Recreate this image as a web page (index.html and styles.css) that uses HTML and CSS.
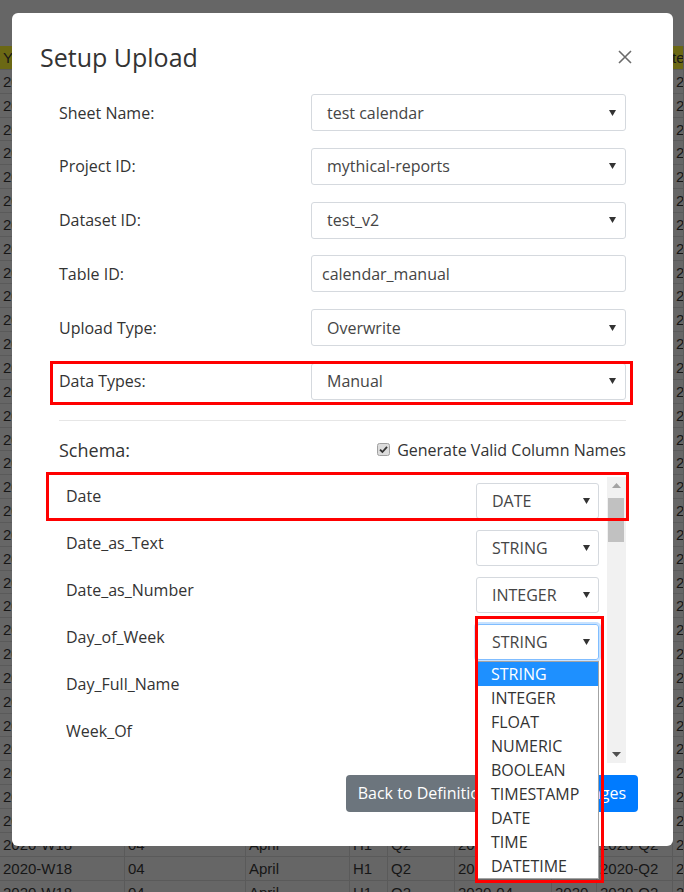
FILE: index.html
```html
<!DOCTYPE html>
<html>
<head>
<meta charset="utf-8">
<title>Setup Upload</title>
<link rel="stylesheet" href="styles.css">
</head>
<body>
<div class="sheet">
  <div class="toolbar"></div>
  <div class="r head"><span>Year_Week</span><span></span><span></span><span></span><span></span><span></span><span></span><span></span><span>Year_Quarter</span></div>
  <div class="r"><span>2020-W14</span><span></span><span></span><span></span><span></span><span></span><span></span><span></span><span>2020</span></div>
  <div class="r"><span>2020-W14</span><span></span><span></span><span></span><span></span><span></span><span></span><span></span><span>2020</span></div>
  <div class="r"><span>2020-W14</span><span></span><span></span><span></span><span></span><span></span><span></span><span></span><span>2020</span></div>
  <div class="r"><span>2020-W14</span><span></span><span></span><span></span><span></span><span></span><span></span><span></span><span>2020</span></div>
  <div class="r"><span>2020-W15</span><span></span><span></span><span></span><span></span><span></span><span></span><span></span><span>2020</span></div>
  <div class="r"><span>2020-W15</span><span></span><span></span><span></span><span></span><span></span><span></span><span></span><span>2020</span></div>
  <div class="r"><span>2020-W15</span><span></span><span></span><span></span><span></span><span></span><span></span><span></span><span>2020</span></div>
  <div class="r"><span>2020-W15</span><span></span><span></span><span></span><span></span><span></span><span></span><span></span><span>2020</span></div>
  <div class="r"><span>2020-W15</span><span></span><span></span><span></span><span></span><span></span><span></span><span></span><span>2020</span></div>
  <div class="r"><span>2020-W15</span><span></span><span></span><span></span><span></span><span></span><span></span><span></span><span>2020</span></div>
  <div class="r"><span>2020-W15</span><span></span><span></span><span></span><span></span><span></span><span></span><span></span><span>2020</span></div>
  <div class="r"><span>2020-W16</span><span></span><span></span><span></span><span></span><span></span><span></span><span></span><span>2020</span></div>
  <div class="r"><span>2020-W16</span><span></span><span></span><span></span><span></span><span></span><span></span><span></span><span>2020</span></div>
  <div class="r"><span>2020-W16</span><span></span><span></span><span></span><span></span><span></span><span></span><span></span><span>2020</span></div>
  <div class="r"><span>2020-W16</span><span></span><span></span><span></span><span></span><span></span><span></span><span></span><span>2020</span></div>
  <div class="r"><span>2020-W16</span><span></span><span></span><span></span><span></span><span></span><span></span><span></span><span>2020</span></div>
  <div class="r"><span>2020-W16</span><span></span><span></span><span></span><span></span><span></span><span></span><span></span><span>2020</span></div>
  <div class="r"><span>2020-W16</span><span></span><span></span><span></span><span></span><span></span><span></span><span></span><span>2020</span></div>
  <div class="r"><span>2020-W17</span><span></span><span></span><span></span><span></span><span></span><span></span><span></span><span>2020</span></div>
  <div class="r"><span>2020-W17</span><span></span><span></span><span></span><span></span><span></span><span></span><span></span><span>2020</span></div>
  <div class="r"><span>2020-W17</span><span></span><span></span><span></span><span></span><span></span><span></span><span></span><span>2020</span></div>
  <div class="r"><span>2020-W17</span><span></span><span></span><span></span><span></span><span></span><span></span><span></span><span>2020</span></div>
  <div class="r"><span>2020-W17</span><span></span><span></span><span></span><span></span><span></span><span></span><span></span><span>2020</span></div>
  <div class="r"><span>2020-W17</span><span></span><span></span><span></span><span></span><span></span><span></span><span></span><span>2020</span></div>
  <div class="r"><span>2020-W17</span><span></span><span></span><span></span><span></span><span></span><span></span><span></span><span>2020</span></div>
  <div class="r"><span>2020-W18</span><span></span><span></span><span></span><span></span><span></span><span></span><span></span><span>2020</span></div>
  <div class="r"><span>2020-W18</span><span></span><span></span><span></span><span></span><span></span><span></span><span></span><span>2020</span></div>
  <div class="r"><span>2020-W18</span><span></span><span></span><span></span><span></span><span></span><span></span><span></span><span>2020</span></div>
  <div class="r"><span>2020-W18</span><span></span><span></span><span></span><span></span><span></span><span></span><span></span><span>2020</span></div>
  <div class="r"><span>2020-W18</span><span></span><span></span><span></span><span></span><span></span><span></span><span></span><span>2020</span></div>
  <div class="r"><span>2020-W18</span><span>04</span><span>April</span><span>H1</span><span>Q2</span><span>2020-04</span><span>2020</span><span>2020-Q2</span><span>2020</span></div>
  <div class="r"><span>2020-W18</span><span>04</span><span>April</span><span>H1</span><span>Q2</span><span>2020-04</span><span>2020</span><span>2020-Q2</span><span>2020</span></div>
  <div class="r"><span>2020-W18</span><span>04</span><span>April</span><span>H1</span><span>Q2</span><span>2020-04</span><span>2020</span><span>2020-Q2</span><span>2020</span></div>
  <div class="r"><span>2020-W18</span><span>04</span><span>April</span><span>H1</span><span>Q2</span><span>2020-04</span><span>2020</span><span>2020-Q2</span><span>2020</span></div>
  <div class="r"><span>2020-W18</span><span>04</span><span>April</span><span>H1</span><span>Q2</span><span>2020-04</span><span>2020</span><span>2020-Q2</span><span>2020</span></div>
</div>

<div class="modal">
  <div class="modal-header">
    <h1 class="title">Setup Upload</h1>
    <span class="close"><svg width="14" height="14" viewBox="0 0 14 14"><path d="M1 1L13 13M13 1L1 13" stroke="#6b6b6b" stroke-width="1.6" fill="none"/></svg></span>
  </div>
  <div class="modal-body">
    <div class="field"><label>Sheet Name:</label><div class="select"><span>test calendar</span><svg class="caret" width="7" height="6" viewBox="0 0 7 6"><path d="M0 0H7L3.5 6Z" fill="#333"/></svg></div></div>
    <div class="field"><label>Project ID:</label><div class="select"><span>mythical-reports</span><svg class="caret" width="7" height="6" viewBox="0 0 7 6"><path d="M0 0H7L3.5 6Z" fill="#333"/></svg></div></div>
    <div class="field"><label>Dataset ID:</label><div class="select"><span>test_v2</span><svg class="caret" width="7" height="6" viewBox="0 0 7 6"><path d="M0 0H7L3.5 6Z" fill="#333"/></svg></div></div>
    <div class="field"><label>Table ID:</label><div class="select input"><span>calendar_manual</span></div></div>
    <div class="field"><label>Upload Type:</label><div class="select"><span>Overwrite</span><svg class="caret" width="7" height="6" viewBox="0 0 7 6"><path d="M0 0H7L3.5 6Z" fill="#333"/></svg></div></div>
    <div class="field last"><label>Data Types:</label><div class="select"><span>Manual</span><svg class="caret" width="7" height="6" viewBox="0 0 7 6"><path d="M0 0H7L3.5 6Z" fill="#333"/></svg></div></div>
    <div class="divider"></div>
    <div class="schema-head">
      <span class="schema-title">Schema:</span>
      <span class="chk"><svg class="box" width="13" height="13" viewBox="0 0 13 13"><rect x="0.5" y="0.5" width="12" height="12" rx="2" fill="#dcdcdc" stroke="#a0a0a0"/><path d="M3 6.6L5.4 9L10 3.8" stroke="#333" stroke-width="1.8" fill="none"/></svg>Generate Valid Column Names</span>
    </div>
    <div class="list">
      <div class="rows">
        <div class="srow"><span class="name">Date</span><div class="sel"><span>DATE</span><svg class="caret" width="7" height="6" viewBox="0 0 7 6"><path d="M0 0H7L3.5 6Z" fill="#333"/></svg></div></div>
        <div class="srow"><span class="name">Date_as_Text</span><div class="sel"><span>STRING</span><svg class="caret" width="7" height="6" viewBox="0 0 7 6"><path d="M0 0H7L3.5 6Z" fill="#333"/></svg></div></div>
        <div class="srow"><span class="name">Date_as_Number</span><div class="sel"><span>INTEGER</span><svg class="caret" width="7" height="6" viewBox="0 0 7 6"><path d="M0 0H7L3.5 6Z" fill="#333"/></svg></div></div>
        <div class="srow"><span class="name">Day_of_Week</span><div class="sel focus"><span>STRING</span><svg class="caret" width="7" height="6" viewBox="0 0 7 6"><path d="M0 0H7L3.5 6Z" fill="#333"/></svg></div></div>
        <div class="srow"><span class="name">Day_Full_Name</span><div class="sel hidden-sel"></div></div>
        <div class="srow"><span class="name">Week_Of</span><div class="sel hidden-sel"></div></div>
      </div>
      <div class="scrollbar">
        <div class="arrow up"><svg width="9" height="5" viewBox="0 0 9 5"><path d="M0 5H9L4.5 0Z" fill="#a3a3a3"/></svg></div>
        <div class="thumb"></div>
        <div class="arrow down"><svg width="9" height="5" viewBox="0 0 9 5"><path d="M0 0H9L4.5 5Z" fill="#505050"/></svg></div>
      </div>
    </div>
  </div>
  <div class="modal-footer">
    <button class="btn gray">Back to Definitions</button>
    <button class="btn blue">Save Changes</button>
  </div>

  <div class="dropdown">
    <div class="opt active">STRING</div>
    <div class="opt">INTEGER</div>
    <div class="opt">FLOAT</div>
    <div class="opt">NUMERIC</div>
    <div class="opt">BOOLEAN</div>
    <div class="opt">TIMESTAMP</div>
    <div class="opt">DATE</div>
    <div class="opt">TIME</div>
    <div class="opt">DATETIME</div>
  </div>

  <div class="mark mark-types"></div>
  <div class="mark mark-date"></div>
  <div class="mark mark-drop"></div>
</div>
</body>
</html>
```

FILE: styles.css
```css
* { box-sizing: border-box; }

html, body {
  margin: 0;
  height: 892px;
  overflow: hidden;
}

body {
  position: relative;
  background: #666666;
  font-family: "Open Sans", "Noto Sans", sans-serif;
}

/* background spreadsheet (dimmed by modal backdrop) */
.toolbar { height: 46px; }

.r {
  display: grid;
  grid-template-columns: 125px 121px 104px 38px 67px 97px 45px 76px 1fr;
  height: 23.85px;
}

.r span {
  border-right: 1px solid #5a5a5a;
  border-bottom: 1px solid #5a5a5a;
  font: 15px/23px "Liberation Sans", Arial, sans-serif;
  color: #161616;
  padding-left: 3px;
  white-space: nowrap;
  overflow: hidden;
}

.r.head span { background: #6b6814; }
.r.head span:last-child { padding-left: 0; text-indent: -73px; }

/* modal */
.modal {
  position: absolute;
  left: 12px;
  top: 13px;
  width: 661px;
  height: 833px;
  background: #fff;
  border-radius: 6px;
}

.modal-header {
  display: flex;
  justify-content: space-between;
  align-items: center;
  padding: 26px 41px 0 28px;
}

.title {
  margin: 0;
  font-size: 25px;
  line-height: 36px;
  font-weight: 400;
  color: #333;
}

.close { display: flex; width: 14px; height: 14px; }

.modal-body { padding: 19px 47px 0; }

.field {
  display: flex;
  align-items: center;
  height: 37px;
  margin-bottom: 16.8px;
}

.field.last { margin-bottom: 0; }

.field label {
  width: 252px;
  font-size: 16px;
  color: #333;
}

.select {
  flex: 1;
  height: 37px;
  border: 1px solid #d5d9de;
  border-radius: 3px;
  display: flex;
  align-items: center;
  justify-content: space-between;
  padding: 0 9px 0 15px;
  font-size: 16px;
  color: #454545;
}

.select.input { padding-left: 10px; }

.caret { flex: none; }

.divider {
  height: 1px;
  background: #e6e6e6;
  margin: 20px 0 16px;
}

.schema-head {
  display: flex;
  justify-content: space-between;
  align-items: center;
  height: 26px;
  margin-bottom: 14px;
}

.schema-title { font-size: 18px; color: #333; }

.chk {
  display: flex;
  align-items: center;
  font-size: 16px;
  color: #333;
}

.chk .box { margin-right: 7px; }

.list {
  display: flex;
  height: 286px;
}

.rows {
  flex: 1;
  overflow: hidden;
}

.srow {
  display: flex;
  justify-content: space-between;
  height: 47px;
  padding: 0 8px 0 7px;
}

.srow .name {
  padding-top: 8px;
  font-size: 16px;
  line-height: 22px;
  color: #333;
}

.sel {
  width: 123px;
  height: 36px;
  margin-top: 6px;
  border: 1px solid #d5d9de;
  border-radius: 3px;
  display: flex;
  align-items: center;
  justify-content: space-between;
  padding: 0 8px 0 15px;
  font-size: 16px;
  color: #454545;
}

.sel.focus {
  border-color: #80bdff;
  box-shadow: 0 0 0 2px rgba(0, 123, 255, 0.22);
}

.scrollbar {
  width: 19px;
  background: #f1f1f1;
  display: flex;
  flex-direction: column;
}

.arrow {
  height: 17px;
  display: flex;
  align-items: center;
  justify-content: center;
}

.thumb {
  height: 44px;
  margin: 4px 2px 0 1px;
  background: #c1c1c1;
}

.arrow.down { margin-top: auto; }

.modal-footer {
  display: flex;
  justify-content: flex-end;
  gap: 2px;
  padding: 12px 35px 0 0;
}

.btn {
  height: 37px;
  padding: 0 12px;
  border: none;
  border-radius: 4px;
  font-family: "Open Sans", "Noto Sans", sans-serif;
  font-size: 16px;
  color: #fff;
}

.btn.gray { background: #6c757d; }
.btn.blue { background: #007bff; }

/* open select popup */
.dropdown {
  position: absolute;
  left: 465px;
  top: 648px;
  width: 122px;
  border: 1px solid #a3a3a3;
  background: #fff;
}

.opt {
  height: 24px;
  line-height: 24px;
  padding-left: 13px;
  font-size: 16px;
  color: #333;
}

.opt.active { background: #1e90ff; color: #fff; }

/* red annotation boxes */
.mark {
  position: absolute;
  border: 3px solid #f00;
}

.mark-types { left: 38px; top: 348px; width: 583px; height: 44px; }
.mark-date { left: 34px; top: 459px; width: 583px; height: 49px; }
.mark-drop { left: 463px; top: 603px; width: 129px; height: 267px; }
```
